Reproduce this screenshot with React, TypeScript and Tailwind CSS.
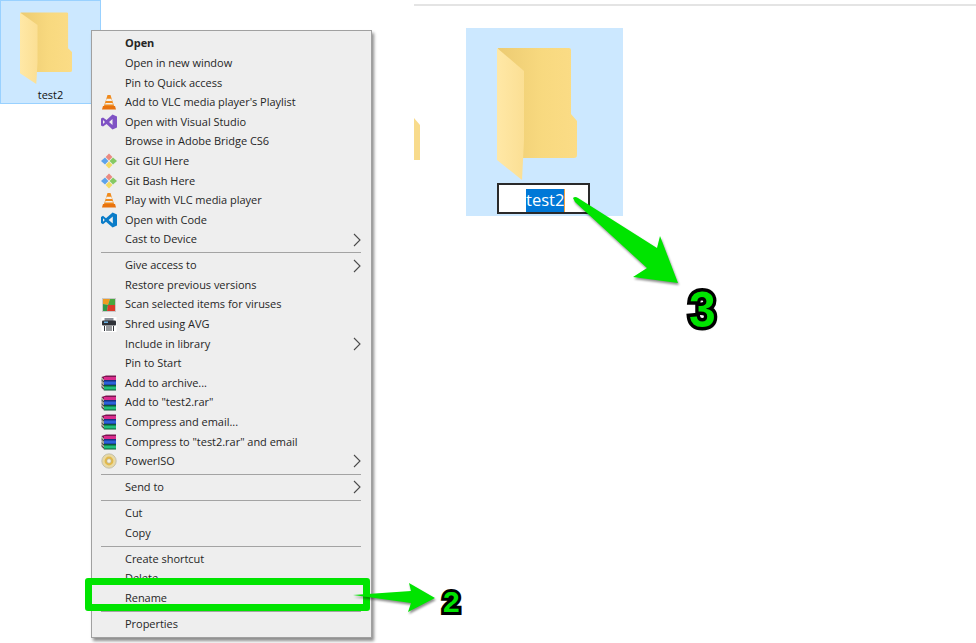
import React from "react";

function Folder({ className }: { className: string }) {
  return (
    <svg viewBox="0 0 80 133" preserveAspectRatio="none" className={className}>
      <defs>
        <linearGradient id="back" x1="0" y1="0" x2="1" y2="0">
          <stop offset="0" stopColor="#eccb72" />
          <stop offset="0.55" stopColor="#f8d97f" />
          <stop offset="1" stopColor="#fbdc86" />
        </linearGradient>
        <linearGradient id="front" x1="0" y1="0" x2="1" y2="0">
          <stop offset="0" stopColor="#ffe8a6" />
          <stop offset="1" stopColor="#fbdf94" />
        </linearGradient>
      </defs>
      <path d="M1 1 H72 Q74 1 74 3 V67 L80 74 V108 Q80 111 77 111 H20 Z" fill="url(#back)" />
      <path d="M0 1 L27 24 V93 L25 133 L0 113 Z" fill="url(#front)" />
    </svg>
  );
}

function Vlc() {
  return (
    <svg viewBox="0 0 16 16" className="h-4 w-4">
      <path d="M6.5 1 H9.5 L13 12 H3 Z" fill="#f08a1c" />
      <path d="M5.6 4.8 H10.4 L11 7 H5 Z" fill="#f4f0e8" />
      <path d="M4.5 9 H11.5 L12 10.6 H4 Z" fill="#f4f0e8" />
      <path d="M2 12 H14 L15 15.5 H1 Z" fill="#e8730f" />
    </svg>
  );
}
function VisualStudio() {
  return (
    <svg viewBox="0 0 16 16" className="h-4 w-4">
      <path d="M11.5 0.5 L16 2.5 V13.5 L11.5 15.5 L5.5 10 L2 12.5 L0 11.5 V4.5 L2 3.5 L5.5 6 Z M11.5 5 L8 8 L11.5 11 Z M2 6 V10 L4 8 Z" fill="#7f52c4" fillRule="evenodd" />
    </svg>
  );
}
function Git() {
  return (
    <svg viewBox="0 0 16 16" className="h-4 w-4">
      <path d="M8 0.5 L11.4 4 L8 7.5 L4.6 4 Z" fill="#ea8a80" />
      <path d="M12 4.5 L16 8 L12 11.5 L8.6 8 Z" fill="#85c964" />
      <path d="M4 4.5 L7.4 8 L4 11.5 L0 8 Z" fill="#5da2ea" />
      <path d="M8 8.5 L11.4 12 L8 15.5 L4.6 12 Z" fill="#f2da62" />
    </svg>
  );
}
function Code() {
  return (
    <svg viewBox="0 0 16 16" className="h-4 w-4">
      <path d="M11.6 0.5 L16 2.5 V13.5 L11.6 15.5 L5 9.8 L2 12.2 L0 11 V5 L2 3.8 L5 6.2 Z M11.8 4.6 L7.6 8 L11.8 11.4 Z M2 6.2 V9.8 L3.8 8 Z" fill="#0a7cc8" fillRule="evenodd" />
    </svg>
  );
}
function Avg() {
  return (
    <svg viewBox="0 0 16 16" className="h-4 w-4">
      <rect x="1" y="1" width="14" height="14" fill="#c8c8c8" />
      <path d="M2 2 H9 L7 8 L2 7 Z" fill="#f09a20" />
      <path d="M9 2 H14 V8 L7 8 Z" fill="#49a83f" />
      <path d="M2 7 L7 8 L6 14 H2 Z" fill="#2f9a48" />
      <path d="M7 8 H14 V14 H6 Z" fill="#dd3a2a" />
    </svg>
  );
}
function Shred() {
  return (
    <svg viewBox="0 0 16 16" className="h-4 w-4">
      <rect x="0.5" y="1" width="15" height="15" fill="#ffffff" />
      <rect x="3.5" y="2" width="9" height="3" fill="#8a8f98" />
      <rect x="1" y="4.5" width="14" height="5" rx="1" fill="#2f3238" />
      <rect x="3" y="5.5" width="4" height="1.5" fill="#6ab0e0" />
      <path d="M3.5 10 V15 M6 10 V15 M8 10 V15 M10 10 V15 M12.5 10 V15" stroke="#33363c" strokeWidth="1" />
    </svg>
  );
}
function Rar() {
  return (
    <svg viewBox="0 0 16 16" className="h-4 w-4">
      <path d="M0.5 2 L5 0.5 H15 V5 H3 Z" fill="#7a1550" />
      <rect x="3" y="2" width="12" height="3" fill="#d92c8c" />
      <path d="M0.5 6 L3 5 H15 V10 H3 Z" fill="#182f80" />
      <rect x="3" y="6.5" width="12" height="3" fill="#2b62d9" />
      <path d="M0.5 11 L3 10 H15 V15.5 H3 Z" fill="#0b5a38" />
      <rect x="3" y="11.5" width="12" height="3" fill="#22c07a" />
      <path d="M0.5 2 L3 5 V15.5 L0.5 13 Z" fill="#a8a698" />
      <path d="M0.5 5 L3 7 M0.5 9 L3 11 M0.5 12 L3 14" stroke="#20202a" strokeWidth="0.8" />
    </svg>
  );
}
function Iso() {
  return (
    <svg viewBox="0 0 16 16" className="h-4 w-4">
      <circle cx="8" cy="8" r="7.2" fill="#e9d9a2" stroke="#b9b7a8" strokeWidth="0.8" />
      <circle cx="8" cy="8" r="4.4" fill="#e3b94a" />
      <circle cx="8" cy="8" r="2.2" fill="#f6f2e2" stroke="#a9a794" strokeWidth="0.6" />
    </svg>
  );
}

type Row =
  | { sep: true }
  | { sep?: false; label: string; icon?: React.ReactNode; bold?: boolean; arrow?: boolean };

const rows: Row[] = [
  { label: "Open", bold: true },
  { label: "Open in new window" },
  { label: "Pin to Quick access" },
  { label: "Add to VLC media player's Playlist", icon: <Vlc /> },
  { label: "Open with Visual Studio", icon: <VisualStudio /> },
  { label: "Browse in Adobe Bridge CS6" },
  { label: "Git GUI Here", icon: <Git /> },
  { label: "Git Bash Here", icon: <Git /> },
  { label: "Play with VLC media player", icon: <Vlc /> },
  { label: "Open with Code", icon: <Code /> },
  { label: "Cast to Device", arrow: true },
  { sep: true },
  { label: "Give access to", arrow: true },
  { label: "Restore previous versions" },
  { label: "Scan selected items for viruses", icon: <Avg /> },
  { label: "Shred using AVG", icon: <Shred /> },
  { label: "Include in library", arrow: true },
  { label: "Pin to Start" },
  { label: "Add to archive...", icon: <Rar /> },
  { label: 'Add to "test2.rar"', icon: <Rar /> },
  { label: "Compress and email...", icon: <Rar /> },
  { label: 'Compress to "test2.rar" and email', icon: <Rar /> },
  { label: "PowerISO", icon: <Iso />, arrow: true },
  { sep: true },
  { label: "Send to", arrow: true },
  { sep: true },
  { label: "Cut" },
  { label: "Copy" },
  { sep: true },
  { label: "Create shortcut" },
  { label: "Delete" },
  { label: "Rename" },
  { sep: true },
  { label: "Properties" },
];

function Menu() {
  return (
    <div className="absolute left-[91px] top-[30px] flex h-[608px] w-[281px] flex-col border border-[#a0a0a0] bg-[#eeeeee] pt-[2.8px] pl-[9px] pr-[10px] shadow-[2px_3px_3px_rgba(0,0,0,0.45)]">
      {rows.map((r, i) =>
        r.sep ? (
          <div key={i} className="flex h-[6.4px] shrink-0 items-center">
            <div className="h-px w-full bg-[#a3a3a3]" />
          </div>
        ) : (
          <div key={i} className="flex h-[19.6px] shrink-0 items-center">
            <div className="flex w-[24px] shrink-0 items-center">{r.icon}</div>
            <span className={`flex-1 whitespace-nowrap text-[11px] tracking-[-0.03px] text-[#262626] ${r.bold ? "font-bold" : ""}`}>{r.label}</span>
            {r.arrow && (
              <svg viewBox="0 0 8 14" className="h-[14px] w-2 shrink-0">
                <path d="M1 1 L7 7 L1 13" fill="none" stroke="#4a4a4a" strokeWidth="1.1" />
              </svg>
            )}
          </div>
        ),
      )}
    </div>
  );
}

export default function App() {
  return (
    <div className="relative flex h-[643px] w-[976px] overflow-hidden bg-white font-['Open_Sans','Liberation_Sans',sans-serif]">
      <div className="w-[414px] shrink-0">
        <div className="flex h-[104px] w-[101px] flex-col items-center border border-[#99d1ff] bg-[#cce8ff] pt-[11px]">
          <Folder className="ml-[-9px] h-[72px] w-[52px]" />
          <span className="mt-[3px] text-[11px] leading-[16px] text-[#111111]">test2</span>
        </div>
      </div>

      <div className="flex-1">
        <div className="mt-[4px] h-[2px] w-full bg-[#e4e4e4]" />
        <div className="mt-[22px] flex">
          <div className="mt-[90px] h-[42px] w-[7px] shrink-0 overflow-hidden">
            <svg viewBox="0 0 7 42" className="h-[42px] w-[7px]">
              <path d="M0 0 L6 7 V42 H0 Z" fill="#f8db8c" />
            </svg>
          </div>
          <div className="ml-[45px] flex h-[188px] w-[157px] flex-col items-start bg-[#cce8ff] pl-[31px] pt-[19px]">
            <Folder className="h-[133px] w-[80px]" />
            <div className="mt-[3px] flex h-[31px] w-[93px] justify-start border-2 border-[#2a2a2a] bg-white pl-[27px] pt-[4px]">
              <span className="h-[23px] border-r border-[#f0a040] bg-[#0078d7] text-[16.5px] leading-[22px] text-white">test2</span>
            </div>
          </div>
        </div>
      </div>

      <Menu />

      <div className="absolute left-[85px] top-[578px] h-[33px] w-[285px] rounded-[3px] border-[7px] border-[#00e400]" />

      <svg viewBox="0 0 976 643" className="pointer-events-none absolute left-0 top-0 h-[643px] w-[976px] drop-shadow-[1px_2px_1px_rgba(0,0,0,0.45)]">
        <path d="M353 595 L411 591 L409 583 L435 598 L408 612 L411 603 Z" fill="#00e400" />
        <path d="M573 198 Q575 196 578 198 L657 248 L660 236 L678 283 L633 277 L647 268 L575 202 Z" fill="#00e400" />
      </svg>

      <span className="absolute left-[443px] top-[584px] font-['Liberation_Sans',sans-serif] text-[30px] font-bold leading-[36px] text-[#00e400] [-webkit-text-stroke:6px_#000000] [paint-order:stroke] [text-shadow:1px_2px_2px_rgba(0,0,0,0.4)]">2</span>
      <span className="absolute left-[689px] top-[280px] origin-left scale-x-[0.96] font-['Liberation_Sans',sans-serif] text-[50px] font-bold leading-[60px] text-[#00e400] [-webkit-text-stroke:7px_#000000] [paint-order:stroke] [text-shadow:1px_2px_3px_rgba(0,0,0,0.4)]">3</span>
    </div>
  );
}
